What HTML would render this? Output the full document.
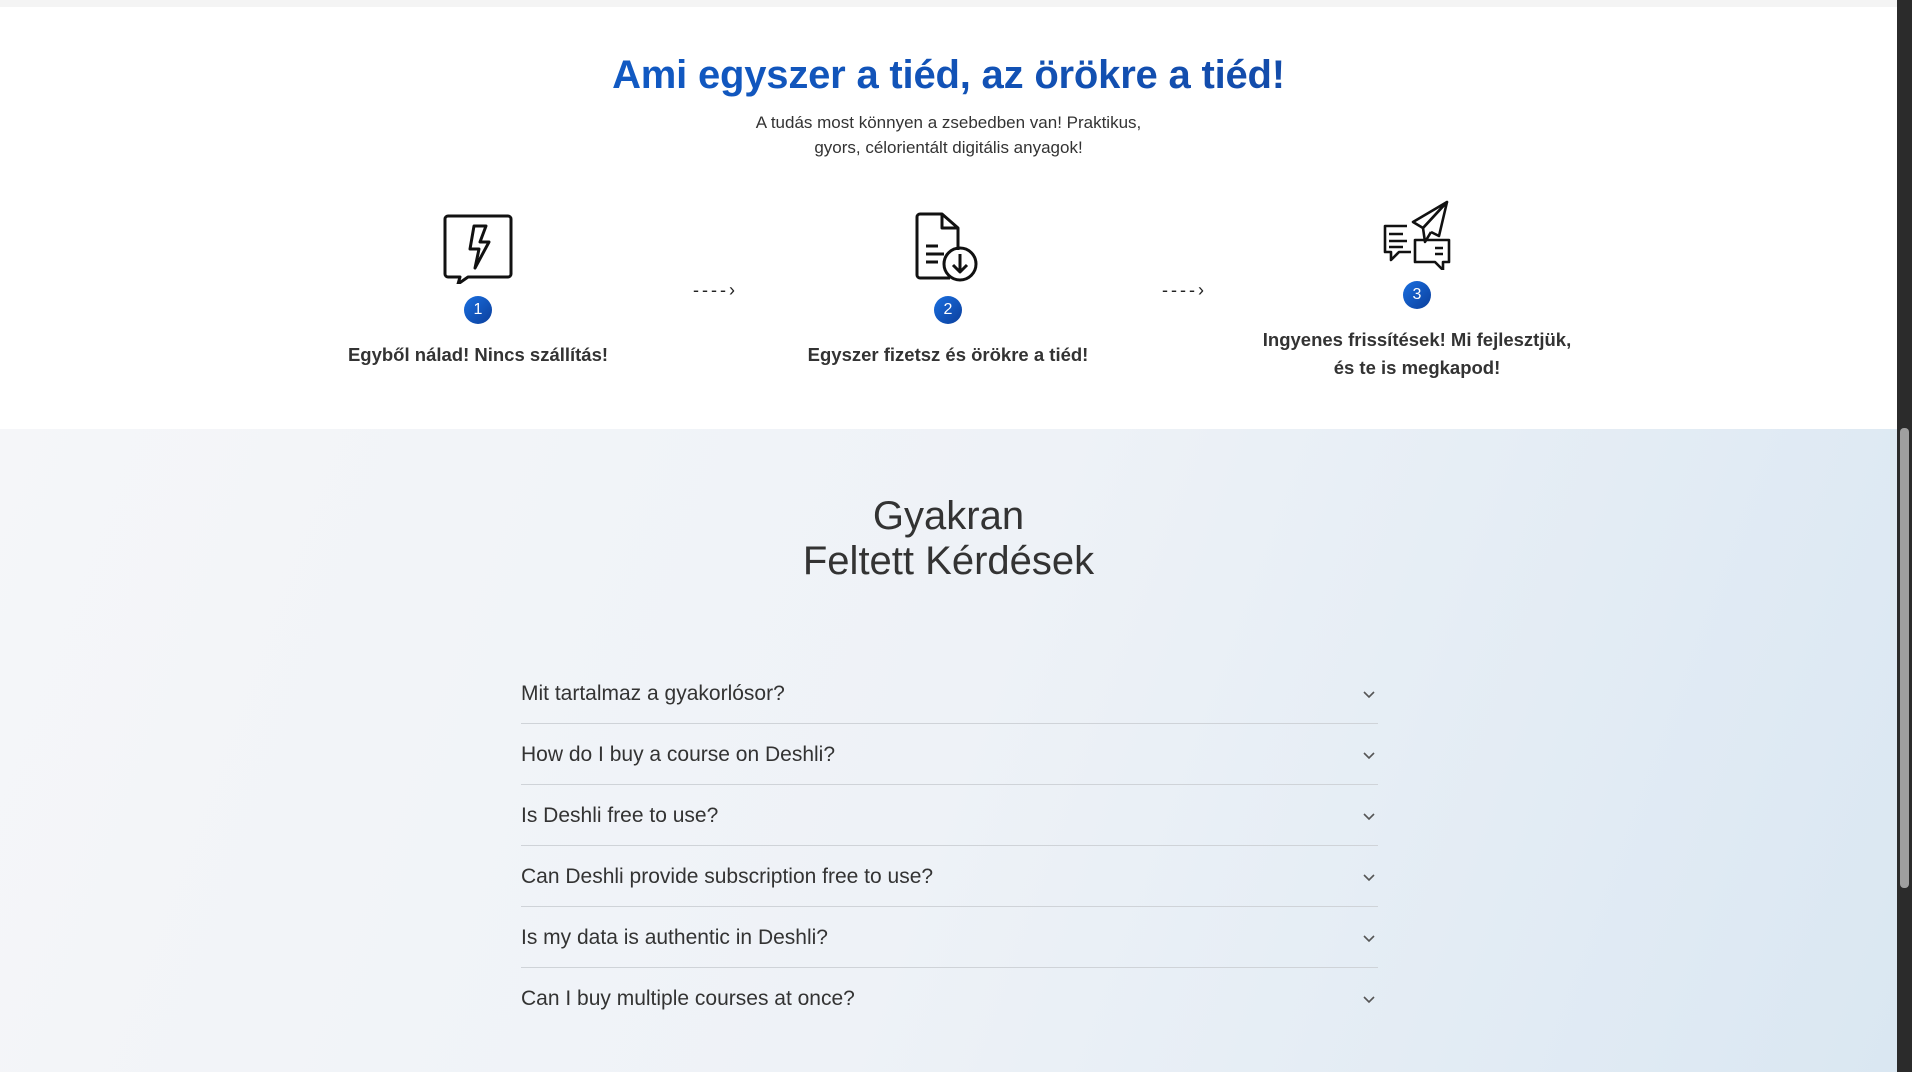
<!DOCTYPE html>
<html><head><meta charset="utf-8"><style>
*{margin:0;padding:0;box-sizing:border-box}
body{width:1912px;height:1072px;overflow:hidden;font-family:"Liberation Sans",sans-serif;color:#333;background:#fff;position:relative}
.top{position:absolute;left:0;top:0;width:1897px;height:7px;background:#f4f4f4}
.sb{position:absolute;right:0;top:0;width:15px;height:1072px;background:#2b2b2b}
.thumb{position:absolute;right:3px;top:428px;width:9px;height:460px;background:#9f9f9f;border-radius:4px}
.c{position:absolute;left:0;width:1897px;text-align:center}
h1{font-size:40px;font-weight:bold;background:linear-gradient(90deg,#0f66d9,#153f94);-webkit-background-clip:text;color:transparent;letter-spacing:-0.2px}
.sub{font-size:17px;line-height:24.5px;color:#333}
.col{position:absolute;width:400px;text-align:center}
.badge{width:28px;height:28px;border-radius:50%;background:linear-gradient(135deg,#1a6fe0,#0b3f9c);color:#fff;font-size:16px;line-height:28px;margin:0 auto}
.lbl{font-size:18.5px;font-weight:bold;color:#333;line-height:28px}
.arr{position:absolute;font-size:18px;color:#222;letter-spacing:3px}
.faqbg{position:absolute;left:0;top:429px;width:1897px;height:643px;background:linear-gradient(110deg,#f5f6f9 0%,#eef2f7 50%,#dae7f2 100%)}
.fh{font-size:40px;line-height:45px;color:#333}
.item{position:absolute;left:521px;width:857px;height:61px;border-bottom:1.5px solid #cfd3d8;font-size:21px;color:#333;padding-top:19px}
.item svg{position:absolute;right:3px;top:28px}
</style></head><body>
<div class="top"></div>
<div class="c" style="top:53px"><h1>Ami egyszer a tiéd, az örökre a tiéd!</h1></div>
<div class="c sub" style="top:111px">A tudás most könnyen a zsebedben van! Praktikus,<br>gyors, célorientált digitális anyagok!</div>

<div class="col" style="left:278px;top:212px">
<svg width="72" height="72" viewBox="0 0 72 72" fill="none" stroke="#111" stroke-width="3" stroke-linejoin="round"><path d="M6 4h60a3 3 0 0 1 3 3v55a3 3 0 0 1-3 3H26l-10 7 2-7H6a3 3 0 0 1-3-3V7a3 3 0 0 1 3-3z"/><path d="M32 14h12l-6 16h9L33 56l4-19h-9z"/></svg>
<div class="badge" style="margin-top:7px">1</div>
<div class="lbl" style="margin-top:17px">Egyből nálad! Nincs szállítás!</div>
</div>
<div class="arr" style="left:693px;top:280px">----›</div>

<div class="col" style="left:748px;top:212px">
<svg width="72" height="72" viewBox="0 0 72 72" fill="none" stroke="#111" stroke-width="3" stroke-linejoin="round"><path d="M38 66H8a3 3 0 0 1-3-3V5a3 3 0 0 1 3-3h22l16 14v22"/><path d="M30 2v14h16"/><path d="M14 34h12M14 42h18M14 50h12"/><circle cx="48" cy="52" r="16"/><path d="M48 42v18M41 53l7 7 7-7"/></svg>
<div class="badge" style="margin-top:7px">2</div>
<div class="lbl" style="margin-top:17px">Egyszer fizetsz és örökre a tiéd!</div>
</div>
<div class="arr" style="left:1162px;top:280px">----›</div>

<div class="col" style="left:1217px;top:200px">
<svg width="72" height="70" viewBox="0 0 72 70" fill="none" stroke="#111" stroke-width="2.6" stroke-linejoin="round"><path d="M66 2L32 22l10 6z"/><path d="M66 2L42 28l2 14 6-10"/><path d="M66 2l-8 34-8-4"/><path d="M26 26H4v26h6v8l8-8h12"/><path d="M8 34h14M8 41h18M8 47h14"/><path d="M34 40h34v22h-6v8l-8-8H34z"/><path d="M54 48h8M54 54h8"/></svg>
<div class="badge" style="margin-top:6px">3</div>
<div class="lbl" style="margin-top:17px">Ingyenes frissítések! Mi fejlesztjük,<br>és te is megkapod!</div>
</div>

<div class="faqbg"></div>
<div class="c fh" style="top:494px">Gyakran<br>Feltett Kérdések</div>
<div style="position:absolute;left:0;top:663px">
<div class="item" style="top:0">Mit tartalmaz a gyakorlósor?<svg width="12" height="8" viewBox="0 0 12 8"><path d="M1 1l5 5 5-5" fill="none" stroke="#555" stroke-width="1.6"/></svg></div>
<div class="item" style="top:61px">How do I buy a course on Deshli?<svg width="12" height="8" viewBox="0 0 12 8"><path d="M1 1l5 5 5-5" fill="none" stroke="#555" stroke-width="1.6"/></svg></div>
<div class="item" style="top:122px">Is Deshli free to use?<svg width="12" height="8" viewBox="0 0 12 8"><path d="M1 1l5 5 5-5" fill="none" stroke="#555" stroke-width="1.6"/></svg></div>
<div class="item" style="top:183px">Can Deshli provide subscription free to use?<svg width="12" height="8" viewBox="0 0 12 8"><path d="M1 1l5 5 5-5" fill="none" stroke="#555" stroke-width="1.6"/></svg></div>
<div class="item" style="top:244px">Is my data is authentic in Deshli?<svg width="12" height="8" viewBox="0 0 12 8"><path d="M1 1l5 5 5-5" fill="none" stroke="#555" stroke-width="1.6"/></svg></div>
<div class="item" style="top:305px;border-bottom:none">Can I buy multiple courses at once?<svg width="12" height="8" viewBox="0 0 12 8"><path d="M1 1l5 5 5-5" fill="none" stroke="#555" stroke-width="1.6"/></svg></div>
</div>
<div class="sb"><div class="thumb"></div></div>
</body></html>
